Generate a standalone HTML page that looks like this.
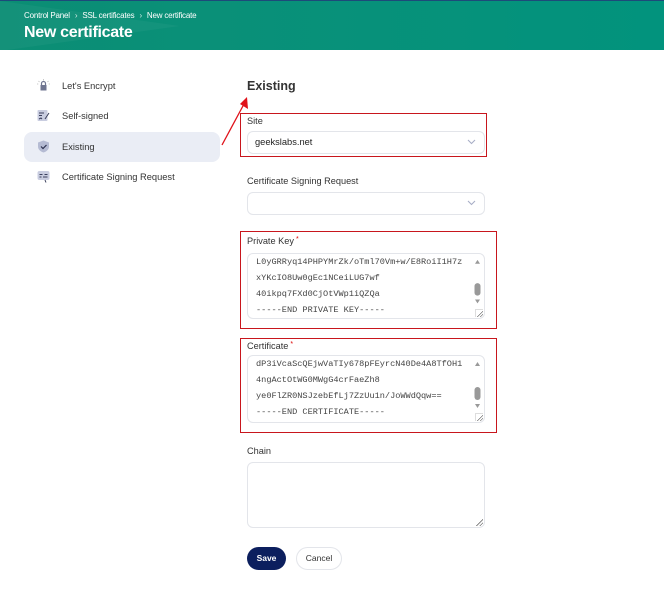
<!DOCTYPE html>
<html><head><meta charset="utf-8"><style>
*{box-sizing:border-box;margin:0;padding:0}
body{width:664px;height:590px;background:#fff;font-family:"Liberation Sans",sans-serif;color:#333;position:relative;overflow:hidden}
.hdr{position:absolute;left:0;top:0;width:664px;height:50px;background:linear-gradient(90deg,#0b8d74 0%,#0a9078 30%,#02937d 100%);border-top:1px solid #1d4a7a}
.hdr .tri{position:absolute;left:0;top:0;width:0;height:0;border-top:25px solid transparent;border-bottom:25px solid transparent;border-left:180px solid rgba(255,255,255,0.04)}
.bc{position:absolute;left:24px;top:10px;font-size:8px;color:#fff;letter-spacing:-0.2px}
.bc span{margin:0 5px;opacity:.8}
.ttl{position:absolute;left:24px;top:23px;font-size:16px;font-weight:bold;color:#fff;letter-spacing:-0.3px}
.nav{position:absolute;left:24px;width:196px;height:30px;font-size:9.3px;color:#333;padding-left:38px;line-height:30px;border-radius:8px}
.nav.a{background:#eaedf5}
.ic{position:absolute;left:13px;top:8px;width:13px;height:13px}
.lbl{position:absolute;left:247px;font-size:9.2px;color:#333}
.lbl b{color:#d00;font-weight:normal;font-size:7px;vertical-align:top;margin-left:2px}
.sel{position:absolute;left:247px;width:238px;height:23px;border:1px solid #e3e5ea;border-radius:6px;font-size:9.3px;padding:0 7px;line-height:21px;color:#222}
.sel svg{position:absolute;right:8px;top:7px}
.ta{position:absolute;left:247px;width:238px;border:1px solid #e3e5ea;border-radius:6px;font-family:"Liberation Mono",monospace;font-size:8.6px;color:#444;padding:0 8px;line-height:16px;overflow:hidden;white-space:nowrap}
.sb{position:absolute;right:3px;top:4px;width:7px;height:calc(100% - 8px)}
.red{position:absolute;border:1.5px solid #c8161d}
.rz{position:absolute;right:1px;bottom:1px;width:8px;height:8px;border-left:1px solid #ddd;border-top:1px solid #ddd;background:linear-gradient(135deg,transparent 55%,#777 56%,#777 62%,transparent 63%,transparent 75%,#777 76%,#777 82%,transparent 83%)}
</style></head><body>
<div class="hdr"><div class="tri"></div>
<div class="bc">Control Panel<span>›</span>SSL certificates<span>›</span>New certificate</div>
<div class="ttl">New certificate</div></div>

<div class="nav" style="top:71px"><svg class="ic" viewBox="0 0 13 13"><rect x="3.5" y="6" width="6" height="5.5" fill="#6f7590"/><path d="M4.5 6V4.5a2 2 0 0 1 4 0V6" stroke="#6f7590" fill="none" stroke-width="1.2"/><path d="M6.5 0v1.5M1.5 2l1 1M11.5 2l-1 1M0 5h1.3M13 5h-1.3" stroke="#bbb" stroke-width=".8"/></svg>Let's Encrypt</div>
<div class="nav" style="top:101px"><svg class="ic" viewBox="0 0 13 13"><rect x="0.5" y="1" width="10" height="11" rx="1" fill="#c9cde0"/><path d="M2 4h5M2 6.5h3M2 10l2-1 1 1M8 10l4-6" stroke="#3a3f5c" stroke-width="1" fill="none"/></svg>Self-signed</div>
<div class="nav a" style="top:132px"><svg class="ic" viewBox="0 0 13 13"><path d="M6.5 0.5L12 2.5v4c0 3-2.5 5-5.5 6-3-1-5.5-3-5.5-6v-4z" fill="#b5bbd3"/><path d="M4 6.5l2 2 3.5-3.5" stroke="#2c3150" stroke-width="1.2" fill="none"/></svg>Existing</div>
<div class="nav" style="top:162px"><svg class="ic" viewBox="0 0 13 13"><rect x="0.5" y="1" width="12" height="9" rx="2" fill="#c9cde0"/><path d="M2.5 4.5h3M7.5 4.5h3M2.5 7h2M6 7h4.5M8 10l1 2.5" stroke="#3a3f5c" stroke-width="1"/></svg>Certificate Signing Request</div>

<div style="position:absolute;left:247px;top:79px;font-size:12.5px;font-weight:bold;color:#333">Existing</div>
<svg style="position:absolute;left:0;top:0" width="664" height="590"><line x1="222" y1="145" x2="244" y2="104" stroke="#e0121a" stroke-width="1.3"/><polygon points="247,97 248,109 240,104" fill="#e0121a"/></svg>

<div class="red" style="left:240px;top:113px;width:247px;height:44px"></div>
<div class="lbl" style="top:116px">Site</div>
<div class="sel" style="top:131px">geekslabs.net<svg width="9" height="6" viewBox="0 0 9 6"><path d="M1 1l3.5 3.5L8 1" stroke="#a8aec6" fill="none" stroke-width="1.1"/></svg></div>

<div class="lbl" style="top:176px">Certificate Signing Request</div>
<div class="sel" style="top:192px"><svg width="9" height="6" viewBox="0 0 9 6"><path d="M1 1l3.5 3.5L8 1" stroke="#a8aec6" fill="none" stroke-width="1.1"/></svg></div>

<div class="red" style="left:240px;top:231px;width:257px;height:98px"></div>
<div class="lbl" style="top:236px">Private Key<b>*</b></div>
<div class="ta" style="top:253px;height:66px">L0yGRRyq14PHPYMrZk/oTml70Vm+w/E8RoiI1H7z<br>xYKcIO8Uw0gEc1NCeiLUG7wf<br>40ikpq7FXd0CjOtVWp1iQZQa<br>-----END PRIVATE KEY-----
<svg class="sb" viewBox="0 0 7 58" preserveAspectRatio="none"><path d="M1 6L3.5 2L6 6z" fill="#999"/><rect x="0.5" y="26" width="6" height="13" rx="3" fill="#999"/><path d="M1 43L3.5 47L6 43z" fill="#999"/></svg><div class="rz"></div></div>

<div class="red" style="left:240px;top:338px;width:257px;height:95px"></div>
<div class="lbl" style="top:341px">Certificate<b>*</b></div>
<div class="ta" style="top:355px;height:68px">dP3iVcaScQEjwVaTIy678pFEyrcN40De4A8TfOH1<br>4ngActOtWG0MWgG4crFaeZh8<br>ye0FlZR0NSJzebEfLj7ZzUu1n/JoWWdQqw==<br>-----END CERTIFICATE-----
<svg class="sb" viewBox="0 0 7 58" preserveAspectRatio="none"><path d="M1 6L3.5 2L6 6z" fill="#999"/><rect x="0.5" y="27" width="6" height="13" rx="3" fill="#999"/><path d="M1 44L3.5 48L6 44z" fill="#999"/></svg><div class="rz"></div></div>

<div class="lbl" style="top:446px">Chain</div>
<div class="ta" style="top:462px;height:66px"><div class="rz" style="border:none"></div></div>

<div style="position:absolute;left:247px;top:547px;width:39px;height:23px;border-radius:12px;background:#0c1f5e;color:#fff;font-size:8.5px;font-weight:bold;text-align:center;line-height:23px">Save</div>
<div style="position:absolute;left:296px;top:547px;width:46px;height:23px;border-radius:12px;border:1px solid #e3e5ea;color:#333;font-size:8.5px;text-align:center;line-height:21px">Cancel</div>
</body></html>
